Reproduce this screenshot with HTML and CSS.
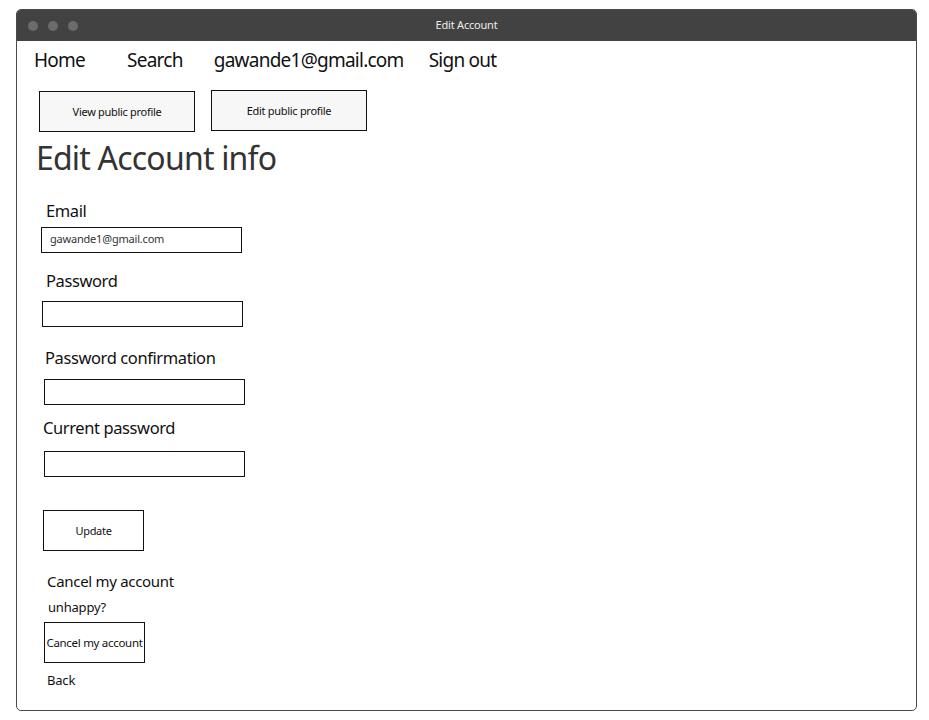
FILE: index.html
```html
<!DOCTYPE html>
<html>
<head>
<meta charset="utf-8">
<title>Edit Account</title>
<link rel="stylesheet" href="styles.css">
</head>
<body>
<div class="window">
  <div class="titlebar">
    <div class="dots"><span class="dot"></span><span class="dot"></span><span class="dot"></span></div>
    <div class="title">Edit Account</div>
  </div>
  <div class="content">
    <nav class="nav">
      <span class="nav-home">Home</span>
      <span class="nav-search">Search</span>
      <span class="nav-email">gawande1@gmail.com</span>
      <span class="nav-signout">Sign out</span>
    </nav>
    <div class="profile-buttons">
      <div class="btn btn-view">View public profile</div>
      <div class="btn btn-edit">Edit public profile</div>
    </div>
    <h1 class="heading">Edit Account info</h1>
    <div class="label l-email">Email</div>
    <div class="input i-email">gawande1@gmail.com</div>
    <div class="label l-pass">Password</div>
    <div class="input i-pass"></div>
    <div class="label l-conf">Password confirmation</div>
    <div class="input i-conf"></div>
    <div class="label l-cur">Current password</div>
    <div class="input i-cur"></div>
    <div class="btn btn-update">Update</div>
    <div class="cancel-title">Cancel my account</div>
    <div class="small unhappy">unhappy?</div>
    <div class="btn btn-cancel">Cancel my account</div>
    <div class="small back">Back</div>
  </div>
</div>
</body>
</html>
```
FILE: styles.css
```css
* { box-sizing: border-box; }
html, body { margin: 0; padding: 0; background: #fff; }
body { font-family: "Noto Sans", "Open Sans", sans-serif; color: #111; }

.window {
  margin: 9px 0 0 16px;
  width: 901px;
  height: 702px;
  border: 1px solid #4a4a4a;
  border-radius: 5px;
  overflow: hidden;
  display: flex;
  flex-direction: column;
}
.titlebar {
  height: 31px;
  background: #424242;
  display: flex;
  align-items: center;
  position: relative;
  flex-shrink: 0;
}
.dots { display: flex; gap: 10px; padding-left: 11px; }
.dot { width: 10px; height: 10px; border-radius: 50%; background: #6b6b6b; }
.title {
  position: absolute;
  left: 0; right: 0;
  top: 0;
  line-height: 29px;
  text-align: center;
  color: #ececec;
  font-size: 11px;
  letter-spacing: -0.2px;
}
.content {
  display: flex;
  flex-direction: column;
  align-items: flex-start;
  padding-left: 17px;
}
.nav {
  display: flex;
  font-size: 19px;
  letter-spacing: -0.75px;
  margin-top: 8px;
  height: 22px;
  line-height: 22px;
  color: #111;
}
.nav-search { margin-left: 42px; }
.nav-email { margin-left: 31px; }
.nav-signout { margin-left: 25px; }

.btn {
  border: 1px solid #111;
  background: #f7f7f7;
  display: flex;
  align-items: center;
  justify-content: center;
  font-size: 11px;
  letter-spacing: -0.3px;
  color: #111;
}
.profile-buttons { display: flex; align-items: flex-start; margin-top: 20px; margin-left: 5px; }
.btn-view { width: 156px; height: 41px; }
.btn-edit { width: 156px; height: 41px; margin-left: 16px; margin-top: -1px; }

.heading {
  font-weight: 400;
  font-size: 32px;
  letter-spacing: -0.8px;
  color: #333;
  margin: 6px 0 0 2px;
  line-height: 40px;
}
.label { font-size: 16.5px; letter-spacing: -0.4px; line-height: 22px; color: #111; }
.input {
  width: 201px;
  height: 26px;
  border: 1px solid #111;
  background: #fff;
  font-size: 11px;
  letter-spacing: -0.2px;
  color: #333;
  padding-left: 8px;
  line-height: 22px;
}
.l-email { margin: 22px 0 0 12px; }
.i-email { margin: 5px 0 0 7px; }
.l-pass { margin: 17px 0 0 12px; }
.i-pass { margin: 9px 0 0 8px; }
.l-conf { margin: 20px 0 0 11px; }
.i-conf { margin: 10px 0 0 10px; }
.l-cur { margin: 12px 0 0 9px; }
.i-cur { margin: 12px 0 0 10px; }
.btn-update { width: 101px; height: 41px; margin: 33px 0 0 9px; background: #fff; }
.cancel-title { font-size: 15px; letter-spacing: -0.3px; margin: 20px 0 0 13px; line-height: 20px; }
.small { font-size: 13px; letter-spacing: -0.2px; line-height: 18px; }
.unhappy { margin: 7px 0 0 14px; }
.btn-cancel { width: 101px; height: 41px; margin: 6px 0 0 10px; background: #fff; font-size: 11.5px; letter-spacing: -0.3px; }
.back { margin: 8px 0 0 13px; }
```
